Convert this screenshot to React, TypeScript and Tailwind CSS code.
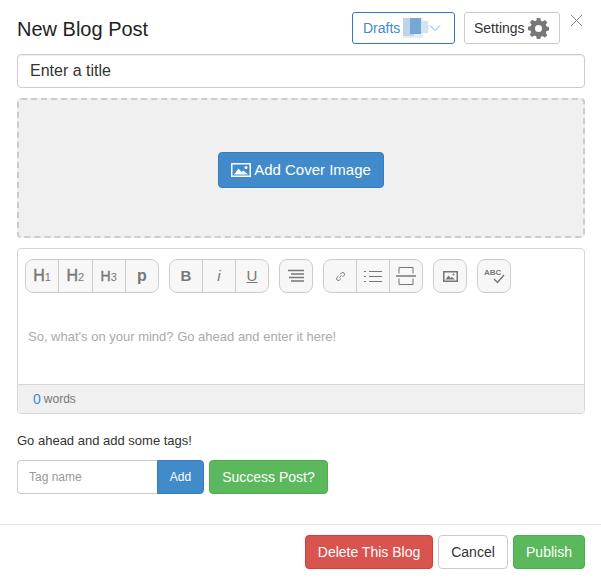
import React from "react";

const btn = "flex flex-1 items-center justify-center h-full text-[#777777]";
const divider = "border-l border-[#cccccc]";
const group = "flex h-[34px] rounded-[8px] border border-[#cccccc] bg-[#f7f7f7] overflow-hidden";

function Heading({ h, n, size }: { h: string; n: string; size: string }) {
  return (
    <span className={`${size} leading-none`}>
      <span className="[-webkit-text-stroke:0.4px_#777777]">{h}</span>
      <span className="text-[11px] font-normal">{n}</span>
    </span>
  );
}

export default function App() {
  return (
    <div className="relative w-[601px] h-[578px] bg-white text-[#333333] font-['Liberation_Sans',Arial,sans-serif] overflow-hidden">
      <svg className="absolute left-[570px] top-[14px]" width="13" height="13" viewBox="0 0 13 13" fill="none" stroke="#8a8a8a" strokeWidth="1">
        <path d="M1 1l11 11M12 1L1 12" />
      </svg>

      <div className="flex flex-col px-[17px] pt-[12px] pr-[16px]">
        <div className="flex items-center h-[32px]">
          <h1 className="text-[20px] leading-none font-normal text-[#222222] flex-1 pt-[1px]">New Blog Post</h1>
          <button className="flex items-center w-[103px] h-[32px] pl-[10px] rounded-[3px] border border-[#337ab7] text-[14px] text-[#428bca] bg-white">
            Drafts
            <svg className="ml-[3px]" width="26" height="20" viewBox="0 0 26 20">
              <rect x="0" y="0" width="20" height="20" fill="#e4eef7" />
              <rect x="0" y="0" width="11" height="18" fill="#bdd4e9" />
              <rect x="7" y="0" width="11" height="16" fill="#77a8d3" />
              <rect x="18" y="3" width="7" height="12" fill="#d3e3f1" />
              <rect x="25" y="7" width="1" height="4" fill="#e4eef7" />
            </svg>
            <svg className="ml-[0px]" width="12" height="8" viewBox="0 0 12 8" fill="none" stroke="#7ba9d2" strokeWidth="1">
              <path d="M1 1.500l5 5 5-5" />
            </svg>
          </button>
          <button className="flex items-center ml-[9px] mr-[25px] w-[96px] h-[32px] pl-[9px] rounded-[3px] border border-[#cccccc] text-[14px] text-[#333333] bg-white">
            Settings
            <svg className="ml-[3px]" width="21" height="21" viewBox="0 0 24 24" fill="#777777">
              <path fillRule="evenodd" d="M10 0h4l.6 3.100c.7.2 1.400.5 2 .9l2.700-1.800 2.800 2.800-1.800 2.700c.4.6.7 1.300.9 2l3.100.6v4l-3.100.6c-.2.7-.5 1.400-.9 2l1.800 2.700-2.800 2.800-2.700-1.800c-.6.4-1.300.7-2 .9L14 24h-4l-.6-3.100c-.7-.2-1.400-.5-2-.9l-2.700 1.800-2.800-2.800 1.800-2.700c-.4-.6-.7-1.300-.9-2L0 14v-4l3.100-.6c.2-.7.5-1.400.9-2L2.200 4.700 5 1.900l2.700 1.800c.6-.4 1.300-.7 2-.9L10 0zm2 8a4 4 0 1 0 0 8 4 4 0 0 0 0-8z" />
            </svg>
          </button>
        </div>

        <input
          readOnly
          value="Enter a title"
          className="mt-[10px] h-[34px] w-full rounded-[4px] border border-[#cccccc] px-[12px] text-[16px] text-[#333333] outline-none shadow-[inset_0_1px_1px_rgba(0,0,0,0.075)]"
        />

        <div className="mt-[10px] h-[140px] flex items-center justify-center pt-[4px] rounded-[4px] border-2 border-dashed border-[#cccccc] bg-[#f0f0f0]">
          <button className="flex items-center justify-center w-[166px] h-[36px] rounded-[4px] border border-[#357ebd] bg-[#428bca] text-white text-[15px]">
            <svg className="mr-[3px]" width="20" height="16" viewBox="0 0 20 16">
              <path fillRule="evenodd" fill="#ffffff" d="M0 1h20v14H0V1zm1.500 1.500v11h17v-11h-17z" />
              <path fill="#ffffff" d="M3 12.500l4.500-6 3 3.500 2-1.500 4.500 4z" />
              <circle cx="15" cy="5.500" r="1.500" fill="#ffffff" />
            </svg>
            Add Cover Image
          </button>
        </div>

        <div className="mt-[10px] h-[166px] flex flex-col rounded-[4px] border border-[#d6d6d6] bg-white overflow-hidden">
          <div className="flex gap-[10px] pl-[7px] pt-[10px]">
            <div className={`${group} w-[134px]`}>
              <span className={btn}><Heading h="H" n="1" size="text-[16px]" /></span>
              <span className={`${btn} ${divider}`}><Heading h="H" n="2" size="text-[16px]" /></span>
              <span className={`${btn} ${divider}`}><Heading h="H" n="3" size="text-[14px]" /></span>
              <span className={`${btn} ${divider} font-bold text-[16px]`}>p</span>
            </div>
            <div className={`${group} w-[100px]`}>
              <span className={`${btn} font-bold text-[15px]`}>B</span>
              <span className={`${btn} ${divider} italic text-[15px]`}>i</span>
              <span className={`${btn} ${divider} underline text-[15px]`}>U</span>
            </div>
            <div className={`${group} w-[34px]`}>
              <span className={btn}>
                <svg width="16" height="14" viewBox="0 0 16 14" stroke="#777777" strokeWidth="1.500">
                  <path d="M0 1.500h16M3 5h13M1 8.500h15M3 12h13" />
                </svg>
              </span>
            </div>
            <div className={`${group} w-[100px]`}>
              <span className={btn}>
                <svg width="11" height="11" viewBox="0 0 11 11" fill="none" stroke="#777777" strokeWidth="1">
                  <path d="M4.500 6.500l2-2M3.500 5L1.800 6.700a1.800 1.800 0 0 0 2.500 2.500L6 7.500M7.500 6l1.700-1.700a1.800 1.800 0 0 0-2.500-2.500L5 3.500" />
                </svg>
              </span>
              <span className={`${btn} ${divider}`}>
                <svg width="18" height="13" viewBox="0 0 18 13" stroke="#777777" strokeWidth="1">
                  <path d="M0 1.500h2M5 1.500h13M0 6.500h2M5 6.500h13M0 11.500h2M5 11.500h13" />
                </svg>
              </span>
              <span className={`${btn} ${divider}`}>
                <svg width="20" height="18" viewBox="0 0 20 18" fill="none" stroke="#777777" strokeWidth="1">
                  <path d="M3 6.500V.5h14v6M3 11.500v6h14v-6" />
                  <path d="M0 9h20" strokeWidth="1.500" />
                </svg>
              </span>
            </div>
            <div className={`${group} w-[34px]`}>
              <span className={btn}>
                <svg width="15" height="11" viewBox="0 0 15 11">
                  <path fillRule="evenodd" fill="#777777" d="M0 0h15v11H0V0zm1.500 1.500v8h12v-8h-12z" />
                  <path fill="#777777" d="M2.500 8.500l3-4 2 2.500 1.500-1 3 2.500z" />
                  <circle cx="10.500" cy="3.500" r="1" fill="#777777" />
                </svg>
              </span>
            </div>
            <div className={`${group} w-[34px]`}>
              <span className={`${btn} relative`}>
                <span className="absolute left-[6px] top-[9px] text-[8px] leading-none font-bold text-[#777777]">ABC</span>
                <svg className="absolute left-[15px] top-[14px]" width="12" height="10" viewBox="0 0 12 10" fill="none" stroke="#777777" strokeWidth="1.500">
                  <path d="M1 5l3.500 3.500L11 1" />
                </svg>
              </span>
            </div>
          </div>

          <p className="mt-[35px] ml-[10px] flex-1 text-[13px] leading-[18px] text-[#aaaaaa]">So, what's on your mind? Go ahead and enter it here!</p>

          <div className="h-[29px] flex items-center pl-[15px] bg-[#f0f0f0] border-t border-[#d6d6d6] text-[12px] text-[#777777]">
            <span className="text-[14px] text-[#428bca] mr-[3px]">0</span> words
          </div>
        </div>

        <p className="mt-[20px] text-[13px] leading-[14px] text-[#333333]">Go ahead and add some tags!</p>

        <div className="mt-[12px] flex h-[34px]">
          <input
            readOnly
            placeholder="Tag name"
            className="w-[140px] h-full rounded-l-[4px] border border-[#cccccc] border-r-0 px-[11px] text-[12px] outline-none placeholder:text-[#999999]"
          />
          <button className="w-[47px] h-full rounded-r-[4px] border border-[#357ebd] bg-[#428bca] text-white text-[12px]">Add</button>
          <button className="ml-[5px] w-[119px] h-full rounded-[4px] border border-[#4cae4c] bg-[#5cb85c] text-white text-[14px]">Success Post?</button>
        </div>
      </div>

      <div className="mt-[30px] border-t border-[#e5e5e5] flex justify-end gap-[5px] pt-[10px] pr-[16px]">
        <button className="w-[128px] h-[34px] rounded-[4px] border border-[#d43f3a] bg-[#d9534f] text-white text-[14px]">Delete This Blog</button>
        <button className="w-[70px] h-[34px] rounded-[4px] border border-[#cccccc] bg-white text-[#333333] text-[14px]">Cancel</button>
        <button className="w-[72px] h-[34px] rounded-[4px] border border-[#4cae4c] bg-[#5cb85c] text-white text-[14px]">Publish</button>
      </div>
    </div>
  );
}
